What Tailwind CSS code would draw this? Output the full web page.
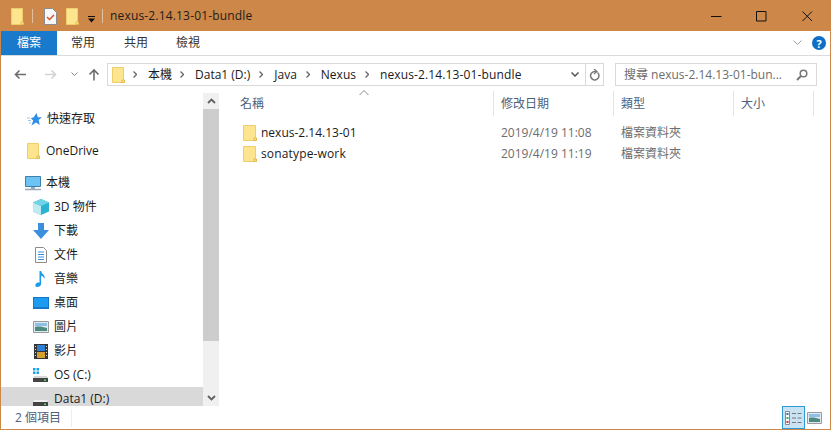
<!DOCTYPE html>
<html lang="zh-Hant">
<head>
  <meta charset="UTF-8" />
  <title>nexus-2.14.13-01-bundle</title>
  <script src="https://cdn.jsdelivr.net/npm/@tailwindcss/browser@4"></script>
</head>
<body class="bg-white overflow-hidden">
  <div class="w-[831px] h-[430px] flex flex-col border border-[#cd8849] bg-white overflow-hidden text-[12px] text-[#1a1a1a] font-['Open_Sans','Noto_Sans_CJK_TC',sans-serif]">

    <!-- title bar -->
    <div class="h-[30px] shrink-0 bg-[#cd8849] flex items-center pl-[10px]">
      <svg width="13" height="17" viewBox="0 0 13 17"><path d="M.5.500h11v16H.5z" fill="#fde58f" stroke="#efcd6a"/><path d="M10 14h2.500v2.500H10z" fill="#fde58f" stroke="#e3b94e"/></svg>
      <div class="w-px h-[14px] bg-[#e3c09f] ml-[8px]"></div>
      <svg class="ml-[11px]" width="13" height="17" viewBox="0 0 13 17"><path d="M.5.500h8l4 4v12H.5z" fill="#f7f7f7" stroke="#8c8c8c"/><path d="M3 9l2.500 2.500L10 7" fill="none" stroke="#d9512c" stroke-width="1.500"/></svg>
      <svg class="ml-[9px]" width="13" height="17" viewBox="0 0 13 17"><path d="M.5.500h11v16H.5z" fill="#fde58f" stroke="#efcd6a"/><path d="M10 14h2.500v2.500H10z" fill="#fde58f" stroke="#e3b94e"/></svg>
      <svg class="ml-[8px] mt-[6px]" width="9" height="7" viewBox="0 0 9 7"><path d="M1 0h7v1H1z" fill="#111"/><path d="M1 2.500h7L4.500 6.500z" fill="#111"/></svg>
      <div class="w-px h-[14px] bg-[#e3c09f] ml-[6px]"></div>
      <span class="ml-[7px] text-[#1c1c1c] tracking-[0.17px]">nexus-2.14.13-01-bundle</span>
      <div class="ml-auto flex items-center pr-[17px]">
        <svg width="11" height="11" viewBox="0 0 11 11"><path d="M0 5.500h10.500" stroke="#111"/></svg>
        <svg class="ml-[34px]" width="11" height="11" viewBox="0 0 11 11"><path d="M.5.500h9.500v9.500H.5z" fill="none" stroke="#111"/></svg>
        <svg class="ml-[35px]" width="11" height="11" viewBox="0 0 11 11"><path d="M.5.500l9.500 9.500M10 .5L.5 10" fill="none" stroke="#111"/></svg>
      </div>
    </div>

    <!-- ribbon tabs -->
    <div class="h-[25px] shrink-0 flex items-stretch border-b border-[#dadbdc]">
      <div class="w-[56px] bg-[#1979ca] text-white flex items-center justify-center">檔案</div>
      <div class="w-[52px] flex items-center justify-center text-[#333]">常用</div>
      <div class="w-[54px] flex items-center justify-center text-[#333]">共用</div>
      <div class="w-[50px] flex items-center justify-center text-[#333]">檢視</div>
      <div class="ml-auto flex items-center pr-[4px]">
        <svg width="9" height="6" viewBox="0 0 9 6"><path d="M.5.500l4 4 4-4" fill="none" stroke="#a0a0a0"/></svg>
        <div class="ml-[10px] w-[14px] h-[14px] rounded-full bg-[#0f6fc6] text-white text-[11px] font-bold leading-none flex items-center justify-center">?</div>
      </div>
    </div>

    <!-- address row -->
    <div class="h-[37px] shrink-0 flex items-center pl-[13px] pr-[13px]">
      <svg width="13" height="11" viewBox="0 0 13 11"><path d="M12 5.500H2M5.500 1.500l-4 4 4 4" fill="none" stroke="#6d6d6d" stroke-width="1.600"/></svg>
      <svg class="ml-[17px]" width="13" height="11" viewBox="0 0 13 11"><path d="M1 5.500h10M7.500 1.500l4 4-4 4" fill="none" stroke="#d2d2d2" stroke-width="1.600"/></svg>
      <svg class="ml-[14px]" width="7" height="5" viewBox="0 0 7 5"><path d="M.5.500l3 3 3-3" fill="none" stroke="#8a8a8a"/></svg>
      <svg class="ml-[10px]" width="12" height="13" viewBox="0 0 12 13"><path d="M6 12.500V2M1.500 6.500L6 2l4.500 4.500" fill="none" stroke="#6d6d6d" stroke-width="1.600"/></svg>
      <div class="ml-[7px] w-[497px] h-[23px] border border-[#d9d9d9] flex items-center pl-[4px]">
        <svg width="13" height="16" viewBox="0 0 13 16"><path d="M.5.500h11v15H.5z" fill="#fde58f" stroke="#efcd6a"/><path d="M10 13h2.500v2.500H10z" fill="#fde58f" stroke="#e3b94e"/></svg>
        <svg class="ml-[8px]" width="4" height="7" viewBox="0 0 4 7"><path d="M.5.500l3 3-3 3" fill="none" stroke="#666" stroke-width="1.300"/></svg>
        <span class="ml-[11px]">本機</span>
        <svg class="ml-[8px]" width="4" height="7" viewBox="0 0 4 7"><path d="M.5.500l3 3-3 3" fill="none" stroke="#666" stroke-width="1.300"/></svg>
        <span class="ml-[11px]">Data1 (D:)</span>
        <svg class="ml-[9px]" width="4" height="7" viewBox="0 0 4 7"><path d="M.5.500l3 3-3 3" fill="none" stroke="#666" stroke-width="1.300"/></svg>
        <span class="ml-[11px]">Java</span>
        <svg class="ml-[9px]" width="4" height="7" viewBox="0 0 4 7"><path d="M.5.500l3 3-3 3" fill="none" stroke="#666" stroke-width="1.300"/></svg>
        <span class="ml-[11px]">Nexus</span>
        <svg class="ml-[9px]" width="4" height="7" viewBox="0 0 4 7"><path d="M.5.500l3 3-3 3" fill="none" stroke="#666" stroke-width="1.300"/></svg>
        <span class="ml-[11px] tracking-[0.13px]">nexus-2.14.13-01-bundle</span>
        <svg class="ml-auto mr-[6px]" width="8" height="5" viewBox="0 0 8 5"><path d="M.5.500L4 4 7.500.5" fill="none" stroke="#555" stroke-width="1.500"/></svg>
        <div class="w-[18px] h-full border-l border-[#d9d9d9] flex items-center justify-center">
          <svg width="11" height="12" viewBox="0 0 11 12"><path d="M8.500 3.500a4.200 4.200 0 1 1-3-1H7" fill="none" stroke="#777" stroke-width="1.500"/><path d="M5 0l3 2.500L5 5" fill="none" stroke="#777" stroke-width="1.200"/></svg>
        </div>
      </div>
      <div class="ml-auto w-[202px] h-[23px] border border-[#d9d9d9] flex items-center pl-[8px] pr-[8px] text-[#6d6d6d]">
        <span>搜尋 nexus-2.14.13-01-bun...</span>
        <svg class="ml-auto" width="12" height="12" viewBox="0 0 12 12"><circle cx="7.500" cy="4.500" r="3.300" fill="none" stroke="#777" stroke-width="1.500"/><path d="M5 7l-4 4" stroke="#777" stroke-width="2"/></svg>
      </div>
    </div>

    <!-- body -->
    <div class="flex-1 min-h-0 flex">
      <!-- nav pane -->
      <div class="w-[202px] shrink-0 overflow-hidden">
        <div class="h-[14px]"></div>
        <div class="flex flex-col text-[#1a1a1a]">
          <div class="h-[24px] flex items-center pl-[26px] gap-[5px]">
            <svg width="15" height="13" viewBox="0 0 15 13"><path d="M9.500 0l1.300 4.200H15l-3.400 2.700 1.200 5.100-3.800-2.600L4.500 12.500l1.700-5L3.800 5.300l2.900-1z" fill="#2f8fe6"/><path d="M0 5h3M1 7.500h3M2 10h2" stroke="#9cc8ee"/></svg>
            <span>快速存取</span>
          </div>
          <div class="h-[8px]"></div>
          <div class="h-[24px] flex items-center pl-[26px] gap-[6px]">
            <svg width="13" height="16" viewBox="0 0 13 16"><path d="M.5.500h11v15H.5z" fill="#fde58f" stroke="#efcd6a"/><path d="M10 13h2.500v2.500H10z" fill="#fde58f" stroke="#e3b94e"/></svg>
            <span>OneDrive</span>
          </div>
          <div class="h-[8px]"></div>
          <div class="h-[24px] flex items-center pl-[24px] gap-[5px]">
            <svg width="16" height="15" viewBox="0 0 16 15"><path d="M.5.500h15v10H.5z" fill="#6cc4f5" stroke="#3f7fa8"/><path d="M6 11h4v2H6z" fill="#9ab"/><path d="M0 13.500h16" stroke="#9ab" stroke-width="1.500"/></svg>
            <span>本機</span>
          </div>
          <div class="h-[24px] flex items-center pl-[32px] gap-[5px]">
            <svg width="16" height="16" viewBox="0 0 16 16"><path d="M8 0l8 3.500v9L8 16 0 12.500v-9z" fill="#2bb3cf"/><path d="M0 3.500L8 7v9l-8-3.500z" fill="#bfeaf2"/><path d="M8 0l8 3.500L8 7 0 3.500z" fill="#6fd5e6"/></svg>
            <span>3D 物件</span>
          </div>
          <div class="h-[24px] flex items-center pl-[32px] gap-[5px]">
            <svg width="16" height="16" viewBox="0 0 16 16"><path d="M5 0h6v7h5l-8 9-8-9h5z" fill="#3c8fdc"/></svg>
            <span>下載</span>
          </div>
          <div class="h-[24px] flex items-center pl-[34px] gap-[7px]">
            <svg width="12" height="16" viewBox="0 0 12 16"><path d="M.5.500h8l3 3v12H.500z" fill="#fff" stroke="#8c8c8c"/><path d="M3 5h6M3 7.500h6M3 10h6M3 12.500h6" stroke="#3c8fdc"/></svg>
            <span>文件</span>
          </div>
          <div class="h-[24px] flex items-center pl-[34px] gap-[7px]">
            <svg width="12" height="16" viewBox="0 0 12 16"><path d="M4.500 0h1.600c.4 3 4.400 3.500 3.400 8-.6-2-2-3-3.400-3.200V13c0 2-2 3-4 3S0 14.500.8 13c.7-1.300 2.400-1.800 3.700-1.300z" fill="#1e9be8"/></svg>
            <span>音樂</span>
          </div>
          <div class="h-[24px] flex items-center pl-[32px] gap-[5px]">
            <svg width="16" height="12" viewBox="0 0 16 12"><path d="M0 0h16v12H0z" fill="#1577c8"/><path d="M1 1h14v9H1z" fill="#1d9bf0"/></svg>
            <span>桌面</span>
          </div>
          <div class="h-[24px] flex items-center pl-[32px] gap-[5px]">
            <svg width="16" height="12" viewBox="0 0 16 12"><path d="M.5.500h15v11H.5z" fill="#dfe9ef" stroke="#9a9a9a"/><path d="M2 6c4-1 8 0 12 1v3H2z" fill="#4d8a80"/><path d="M2 2h12v3H2z" fill="#8fbfe6"/></svg>
            <span>圖片</span>
          </div>
          <div class="h-[24px] flex items-center pl-[33px] gap-[6px]">
            <svg width="14" height="15" viewBox="0 0 14 15"><path d="M0 0h14v15H0z" fill="#333"/><path d="M3 1h8v6H3z" fill="#2f7fd6"/><path d="M3 8h8v6H3z" fill="#d6a02f"/><path d="M1 2h1v1H1zM1 5h1v1H1zM1 8h1v1H1zM1 11h1v1H1zM12 2h1v1h-1zM12 5h1v1h-1zM12 8h1v1h-1zM12 11h1v1h-1z" fill="#ddd"/></svg>
            <span>影片</span>
          </div>
          <div class="h-[24px] flex items-center pl-[32px] gap-[6px]">
            <svg width="15" height="14" viewBox="0 0 15 14"><path d="M0 0h2.500v2.500H0zM3.500 0H6v2.500H3.500zM0 3.500h2.500V6H0zM3.500 3.500H6V6H3.500z" fill="#18a0e8"/><path d="M1 8h13l1 2.500H0z" fill="#d8d8d8"/><path d="M0 10h15v4H0z" fill="#444"/><path d="M11 11.500h2v1.500h-2z" fill="#4fdc5a"/></svg>
            <span>OS (C:)</span>
          </div>
          <div class="h-[24px] flex items-center pl-[32px] gap-[6px] bg-[#d9d9d9]">
            <svg class="mt-[2px]" width="15" height="14" viewBox="0 0 15 14"><path d="M1 7h13l1 2.500H0z" fill="#efefef"/><path d="M0 9h15v5H0z" fill="#444"/><path d="M11 10.500h2V12h-2z" fill="#4fdc5a"/></svg>
            <span>Data1 (D:)</span>
          </div>
        </div>
      </div>

      <!-- scrollbar -->
      <div class="w-[16px] shrink-0 bg-[#f0f0f0] flex flex-col">
        <div class="h-[16px] flex items-center justify-center">
          <svg width="9" height="6" viewBox="0 0 9 6"><path d="M1 5l3.500-3.500L8 5" fill="none" stroke="#606060" stroke-width="1.800"/></svg>
        </div>
        <div class="h-[232px] bg-[#cdcdcd]"></div>
        <div class="flex-1"></div>
        <div class="h-[16px] flex items-center justify-center">
          <svg width="9" height="6" viewBox="0 0 9 6"><path d="M1 1l3.500 3.500L8 1" fill="none" stroke="#606060" stroke-width="1.800"/></svg>
        </div>
      </div>

      <!-- file list -->
      <div class="flex-1 min-w-0 relative">
        <svg class="absolute left-[140px] top-[-3px]" width="10" height="6" viewBox="0 0 10 6"><path d="M.5 5L5 .5 9.500 5" fill="none" stroke="#8a8a8a"/></svg>
        <div class="h-[25px] mt-[-2px] flex text-[#4c607a]">
          <div class="w-[275px] pl-[21px] flex items-center border-r border-[#e5e5e5]">名稱</div>
          <div class="w-[120px] pl-[7px] flex items-center border-r border-[#e5e5e5]">修改日期</div>
          <div class="w-[120px] pl-[7px] flex items-center border-r border-[#e5e5e5]">類型</div>
          <div class="w-[80px] pl-[7px] flex items-center border-r border-[#e5e5e5]">大小</div>
        </div>
        <div class="mt-[6px]">
          <div class="h-[21px] flex items-center">
            <div class="w-[275px] pl-[24px] flex items-center gap-[4px]">
              <svg width="14" height="16" viewBox="0 0 14 16"><path d="M.5.500h12v15H.5z" fill="#fde58f" stroke="#efcd6a"/><path d="M11 13h2.500v2.500H11z" fill="#fde58f" stroke="#e3b94e"/></svg>
              <span>nexus-2.14.13-01</span>
            </div>
            <div class="w-[120px] pl-[7px] text-[#6d6d6d]">2019/4/19 11:08</div>
            <div class="w-[120px] pl-[7px] text-[#6d6d6d]">檔案資料夾</div>
          </div>
          <div class="h-[21px] flex items-center">
            <div class="w-[275px] pl-[24px] flex items-center gap-[4px]">
              <svg width="14" height="16" viewBox="0 0 14 16"><path d="M.5.500h12v15H.5z" fill="#fde58f" stroke="#efcd6a"/><path d="M11 13h2.500v2.500H11z" fill="#fde58f" stroke="#e3b94e"/></svg>
              <span class="tracking-[0.15px]">sonatype-work</span>
            </div>
            <div class="w-[120px] pl-[7px] text-[#6d6d6d]">2019/4/19 11:19</div>
            <div class="w-[120px] pl-[7px] text-[#6d6d6d]">檔案資料夾</div>
          </div>
        </div>
      </div>
    </div>

    <!-- status bar -->
    <div class="h-[23px] shrink-0 flex items-center pl-[14px] pr-[8px] text-[#4c607a]">
      <span class="w-[57px] border-r border-[#eeeeee]">2 個項目</span>
      <div class="ml-auto w-[23px] h-[23px] bg-[#c9e3f5] border border-[#2f9bd6] flex items-center justify-center">
        <svg width="17" height="14" viewBox="0 0 17 14"><path d="M.5.500h4v13h-4z" fill="#fff" stroke="#888"/><path d="M1.500 2h2v2h-2z" fill="#3366aa"/><path d="M1.500 6h2v2h-2z" fill="#4aa564"/><path d="M1.500 10h2v2h-2z" fill="#cc3333"/><path d="M7 2.500h4M12.500 2.500h4M7 7h4M12.500 7h4M7 11.500h4M12.500 11.500h4" stroke="#777"/></svg>
      </div>
      <div class="ml-[2px] w-[15px] h-[12px]">
        <svg width="15" height="12" viewBox="0 0 15 12"><path d="M.5.500h14v11H.5z" fill="#dfe9ef" stroke="#9a9a9a"/><path d="M2 6c4-1 7 0 11 1v3H2z" fill="#4d8a80"/><path d="M2 2h11v3H2z" fill="#8fbfe6"/></svg>
      </div>
    </div>
  </div>
</body>
</html>
